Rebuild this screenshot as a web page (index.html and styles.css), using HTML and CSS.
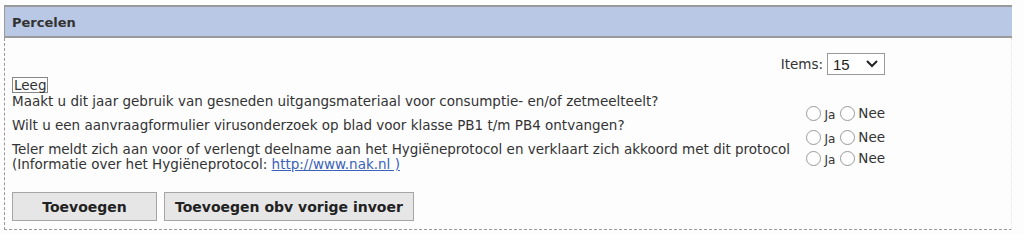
FILE: index.html
```html
<!DOCTYPE html>
<html lang="nl">
<head>
    <meta charset="UTF-8">
    <title>Percelen</title>
    <link rel="stylesheet" href="styles.css">
</head>
<body>
    <div id="percelen">
        <div class="kop">Percelen</div>
        <div class="inhoud">
            <div class="items">
                <span>Items:</span>
                <div class="select">
                    <span>15</span>
                    <svg width="14" height="10" viewBox="0 0 14 10"><path d="M2 2 L7 7 L12 2" fill="none" stroke="#222" stroke-width="2"/></svg>
                </div>
            </div>
            <span class="leeg">Leeg</span>

            <div class="vragen">
                <div class="vraag">
                    <div class="tekst">Maakt u dit jaar gebruik van gesneden uitgangsmateriaal voor consumptie- en/of zetmeelteelt?</div>
                    <div class="keuze">
                        <span class="radio"></span><span class="ja">Ja</span>
                        <span class="radio"></span><span>Nee</span>
                    </div>
                </div>
                <div class="vraag">
                    <div class="tekst">Wilt u een aanvraagformulier virusonderzoek op blad voor klasse PB1 t/m PB4 ontvangen?</div>
                    <div class="keuze">
                        <span class="radio"></span><span class="ja">Ja</span>
                        <span class="radio"></span><span>Nee</span>
                    </div>
                </div>
                <div class="vraag">
                    <div class="tekst">Teler meldt zich aan voor of verlengt deelname aan het Hygiëneprotocol en verklaart zich akkoord met dit protocol<br>(Informatie over het Hygiëneprotocol: <a href="">http://www.nak.nl )</a></div>
                    <div class="keuze hoger">
                        <span class="radio"></span><span class="ja">Ja</span>
                        <span class="radio"></span><span>Nee</span>
                    </div>
                </div>
            </div>

            <div class="knoppen">
                <button type="button" class="knop">Toevoegen</button>
                <button type="button" class="knop">Toevoegen obv vorige invoer</button>
            </div>
        </div>
    </div>
</body>
</html>
```

FILE: styles.css
```css
* {
    box-sizing: border-box;
}

body {
    margin: 0;
    background-color: #fdfdfe;
    font-family: "DejaVu Sans", Verdana, sans-serif;
    font-size: 13.5px;
    color: #333;
}

#percelen {
    margin: 5px 12px 0 4px;
}

.kop {
    height: 33px;
    background-color: #b9c8e4;
    border-top: 2px solid #9a9a9a;
    border-bottom: 2px solid #9a9a9a;
    border-left: 1px solid #9a9a9a;
    padding: 8px 0 0 7px;
    font-size: 13px;
    font-weight: bold;
    color: #333;
}

.inhoud {
    border-left: 1px dashed #999;
    border-right: 1px dotted #e4e4e4;
    border-bottom: 1px dashed #999;
    padding: 15px 7px 8px 7px;
}

.items {
    width: 873px;
    display: flex;
    justify-content: flex-end;
    align-items: center;
    gap: 4px;
}

.select {
    width: 58px;
    height: 22px;
    border: 1px solid #999;
    background-color: #fff;
    display: flex;
    align-items: center;
    justify-content: space-between;
    padding: 0 5px 0 5px;
    font-family: "Liberation Sans", Arial, sans-serif;
    font-size: 15px;
    color: #222;
}

.leeg {
    display: inline-block;
    margin-top: 2px;
    border: 1px solid #888;
    padding: 0 1px;
    line-height: 14px;
}

.vragen {
    width: 873px;
    margin-top: 1px;
}

.vraag {
    display: flex;
    justify-content: space-between;
    line-height: 15px;
}

.keuze {
    display: flex;
    align-items: center;
    margin-top: 12px;
    margin-bottom: -3px;
    height: 15px;
    white-space: nowrap;
}

.keuze.hoger {
    margin-top: 9px;
}

.radio {
    width: 15px;
    height: 15px;
    border: 1px solid #999;
    border-radius: 50%;
    background-color: #fff;
    margin-right: 3px;
}

.ja {
    margin-right: 5px;
    margin-top: 3px;
    font-size: 12px;
}

a {
    color: #3a63b8;
}

.knoppen {
    display: flex;
    gap: 7px;
    margin-top: 20px;
}

.knop {
    height: 29px;
    padding: 0 10px;
    background-color: #e6e6e6;
    border: 1px solid #a5a5a5;
    font-family: "DejaVu Sans", Verdana, sans-serif;
    font-size: 14px;
    font-weight: bold;
    color: #222;
}

.knop:first-child {
    width: 145px;
}
```
